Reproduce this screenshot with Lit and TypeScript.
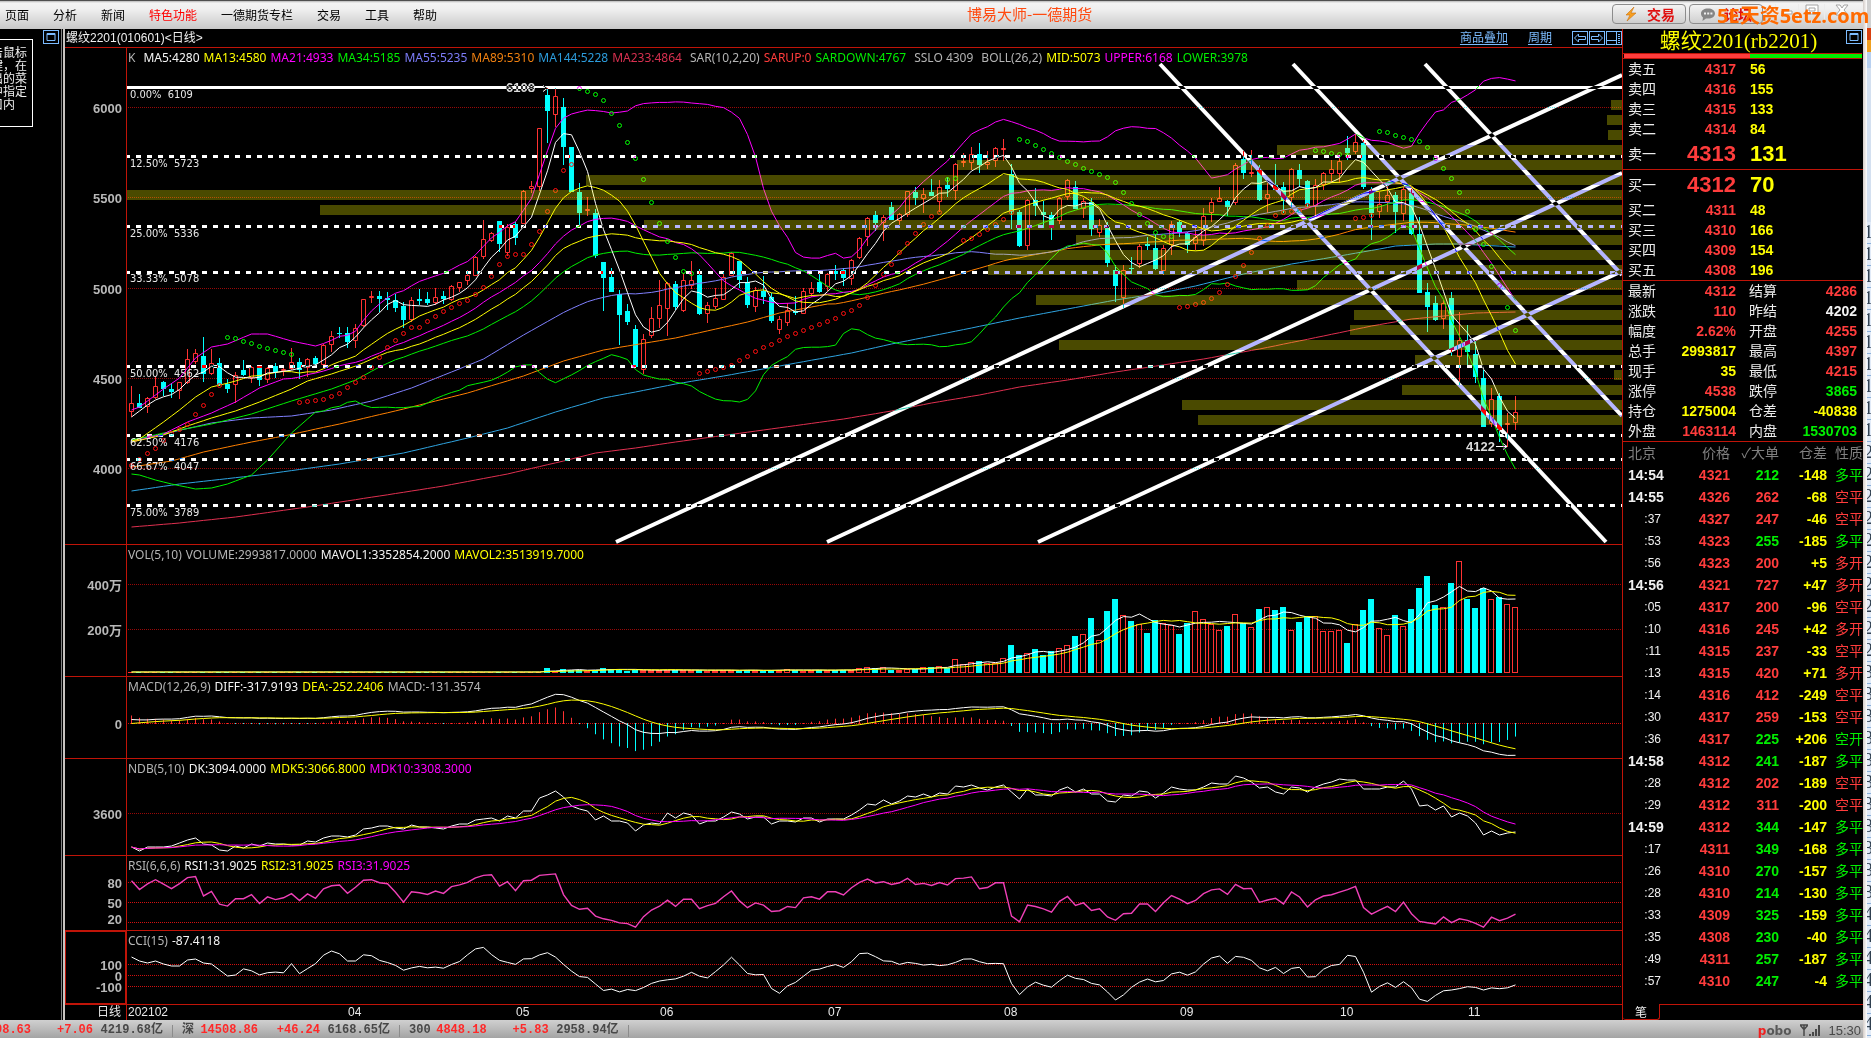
import { LitElement, html, svg, css } from "lit";
import { customElement, property } from "lit/decorators.js";
import { classMap } from "lit/directives/class-map.js";

/* ------------------------------------------------------------------ */
/* Daily bars: direction (r = up, c = down), high, low, body top and   */
/* body bottom, all on the vertical plot scale of the price panel.     */
/* ------------------------------------------------------------------ */
const RAW = `
r386,417,403,412 c394,408,403,408 r397,413,398,407 r376,399,386,398 c381,396,382,389
c383,398,389,392 r382,399,382,391 r349,384,359,383 r349,364,353,362 c337,382,356,374
r349,375,363,374 c358,386,363,385 c379,393,384,389 r372,403,375,385 c360,376,370,375
r366,383,367,378 c366,386,366,380 r367,383,368,380 c363,378,366,372 r368,376,369,370
r348,370,362,369 c358,379,362,370 r358,377,359,368 c356,365,358,364 r344,365,345,365
r331,352,336,345 c327,338,333,334 c327,348,333,342 r324,348,328,341 r299,327,299,326
r291,303,296,298 c291,312,296,299 c292,310,298,300 c294,312,300,308 c302,328,306,320
r297,322,300,320 c289,305,299,301 c292,305,299,303 r288,305,297,303 c291,304,296,299
r285,301,286,300 r282,292,282,288 r270,285,275,281 r256,276,257,276 r220,259,239,257
r232,242,233,241 c221,252,221,244 r224,256,227,253 c222,245,224,238 r190,224,191,224
r181,193,186,189 r128,191,128,187 c88,143,95,111 r88,127,96,115 c98,165,107,147
c147,192,147,192 c183,227,192,213 r197,216,209,211 c209,258,213,256 c262,311,262,278
c268,292,277,292 c290,345,294,315 c304,325,311,322 c325,367,329,367 r334,374,339,370
r307,338,318,336 r280,328,305,319 r282,336,283,309 c281,310,284,307 r273,312,280,311
r261,289,280,286 c269,315,275,314 r302,323,305,314 r288,309,298,307 r272,300,277,300
r252,276,253,276 c261,288,261,280 c277,308,282,305 r287,312,290,307 c276,304,291,297
c293,323,297,321 r316,334,319,330 r303,326,310,323 c296,315,311,313 r288,314,291,314
r282,297,288,294 c273,293,282,292 r273,291,274,287 c265,280,271,274 c268,286,270,278
r259,285,260,279 r237,259,238,258 r217,246,218,237 c211,231,215,223 r215,241,217,223
c202,220,207,220 r213,226,214,221 r191,217,191,215 c187,205,192,198 r188,213,194,199
c179,196,192,196 r180,212,187,202 c177,197,185,189 r163,200,164,191 r153,167,161,163
r147,170,154,163 c143,173,154,165 r151,169,162,165 r147,167,148,161 r139,161,148,150
c164,229,174,212 c210,247,212,246 r199,250,200,246 c188,216,200,206 c201,228,212,215
c212,240,215,228 r197,224,198,221 r179,200,180,197 c181,209,187,209 r198,218,201,209
c198,236,202,229 r219,237,225,233 c222,267,227,263 c265,302,270,286 r265,308,270,298
c257,274,268,269 r244,268,246,264 c237,250,244,246 c234,270,248,269 r245,275,248,271
r221,255,224,245 c220,237,222,233 c232,253,233,245 r228,250,237,244 r208,246,216,241
r198,222,202,213 r187,202,198,202 c200,216,201,207 r163,205,165,203 c150,179,159,173
r150,177,172,173 c165,201,170,200 r183,213,194,199 c164,191,185,190 c182,213,187,201
r168,208,169,198 c164,187,170,179 c180,208,181,204 r179,215,185,206 r172,190,173,185
r160,183,169,174 r157,183,161,174 c136,160,148,153 r134,154,142,152 c140,189,143,187
c187,240,191,213 r192,218,204,212 r185,212,195,202 c192,233,195,212 r187,221,189,214
c189,235,193,234 c217,293,234,293 c283,332,292,307 c296,321,303,320 r300,329,303,319
c292,356,298,350 r312,385,340,357 c325,365,340,352 c340,383,354,377 c370,427,378,427
r388,427,399,424 c393,442,396,430 r413,447,423,425 r396,430,412,423`;

interface Bar { up: boolean; h: number; l: number; t: number; b: number; c: number; }
const BARS: Bar[] = RAW.trim().split(/\s+/).map((s) => {
  const up = s[0] === "r";
  const [h, l, t, b] = s.slice(1).split(",").map(Number);
  return { up, h, l, t, b, c: up ? t : b };
});
const N = BARS.length;
const LEFT = 127;
const WIDTH = 1495;
const xAt = (i: number) => 131 + 8 * i;
const toPrice = (y: number) => 6000 - (y - 107.5) / 0.1805;

type Keys = [number, number][];
/* Linear interpolation between keyed samples. */
function keyed(keys: Keys, from: number, to: number): number[] {
  const out: number[] = [];
  let k = 0;
  for (let i = from; i < to; i++) {
    while (k < keys.length - 2 && keys[k + 1][0] <= i) k++;
    const [a, ya] = keys[k];
    const [b, yb] = keys[Math.min(k + 1, keys.length - 1)];
    out.push(b === a ? ya : ya + ((yb - ya) * (i - a)) / (b - a));
  }
  return out;
}
const closes = BARS.map((b) => b.c);
const mean = (v: number[]) => v.reduce((a, b) => a + b, 0) / v.length;
function average(src: number[], n: number): number[] {
  return src.map((_, i) => mean(src.slice(Math.max(0, i - n + 1), i + 1)));
}
function ma(n: number, head: Keys): number[] {
  const full = average(closes, n);
  head = [...head, [n - 1, full[n - 1]]];
  return [...keyed(head, 0, n - 1), ...full.slice(n - 1)];
}
const MA5 = ma(5, [[0, 417], [1, 411], [2, 405], [3, 400]]);
const MA13 = ma(13, [[0, 441], [1, 439], [4, 422], [6, 410], [8, 397], [10, 387]]);
const MA21 = ma(21, [[0, 442], [1, 440], [4, 434], [7, 422], [10, 413], [13, 402], [16, 388], [19, 379]]);
const MA34 = ma(34, [[0, 440], [4, 433], [10, 424], [15, 414], [20, 401], [25, 389], [28, 380], [31, 367]]);
const MA55 = ma(55, [[0, 440], [4, 434], [10, 423], [15, 418], [20, 416], [25, 410], [30, 401], [35, 388], [40, 372], [44, 359], [49, 335]]);
const MA89 = ma(89, [[0, 467], [5, 461], [9, 452], [15, 442], [19, 436], [26, 424], [34, 409], [42, 393], [49, 376], [54, 361], [59, 350], [62, 346], [68, 338], [77, 322], [81, 313], [87, 304]]);
const MA144 = keyed([[0, 491], [6, 484], [16, 475], [26, 464], [34, 453], [42, 438], [47, 428], [53, 412], [59, 398], [63, 392], [68, 384], [74, 376], [81, 366], [90, 353], [95, 344], [100, 336], [105, 328], [111, 318], [117, 309], [123, 300], [128, 294], [133, 286], [139, 274], [145, 264], [151, 256], [156, 249], [158, 246], [163, 244], [166, 244], [173, 247]], 0, N);
const MA233 = keyed([[0, 527], [6, 523], [13, 517], [22, 507], [31, 496], [39, 486], [47, 474], [54, 461], [58, 453], [63, 448], [68, 442], [79, 430], [89, 419], [95, 411], [100, 403], [106, 395], [111, 387], [117, 380], [123, 372], [134, 359], [141, 349], [149, 336], [155, 326], [160, 319], [168, 313], [173, 312]], 0, N);
const MID = ma(26, [[0, 442], [4, 435], [7, 426], [10, 418], [13, 411], [16, 402], [20, 389], [22, 381]]);
const sigma = closes.map((_, i) => {
  const w = closes.slice(Math.max(0, i - 25), i + 1);
  const m = mean(w);
  return Math.sqrt(mean(w.map((v) => (v - m) ** 2)));
});
const UPPER = [
  ...keyed([[0, 410], [1, 407], [4, 389], [6, 378], [8, 358], [10, 347], [12, 344], [15, 334], [17, 334], [20, 341], [23, 346], [25, 341]], 0, 25),
  ...MID.slice(25).map((m, i) => m - 2 * sigma[i + 25]),
];
const LOWER = [
  ...keyed([[0, 474], [1, 475], [3, 480], [5, 484], [8, 489], [10, 488], [12, 484], [15, 475], [17, 460], [20, 433], [23, 412], [25, 410]], 0, 25),
  ...MID.slice(25).map((m, i) => m + 2 * sigma[i + 25]),
];

/* Parabolic stops: first bar, colour, samples. */
const SAR: [number, string, string][] = [
  [0, "r", "465 459 453 448 440 433 429 424 414 405 394 385"],
  [12, "g", "337 338 341 343 346 348 350 352 354"],
  [21, "r", "402 401 400 399 396 393 387 382 377 367 357 347 340 333 327 327 321 316 311 307 303 300 294 287 276 264 256 254 254 244 231 211 190 170 164"],
  [56, "g", "88 91 94 100 113 125 142 158 179 202 223 241 257 271 273"],
  [71, "r", "373 371 369 367 365 360 356 351 347 344 340 336 333 330 327 324 321 318 313 310 305 297 285 274 264 252 243 233 224 216 212"],
  [102, "g", "179 178"],
  [104, "r", "240 238 234 229 224 219 212"],
  [111, "g", "139 141 145 149 153 157 161 164 168 171 174 177 182 192 203 214 223 232 236 236"],
  [131, "r", "307 306 304 302 298 292 284 276 265 252 238 225 215 212 211 210 205"],
  [148, "g", "150 151 153 154 155"],
  [153, "r", "218 217 215"],
  [156, "g", "131 132 135 137 139 141 147 158 168 178 192 211 229 244 266 285 307 330"],
];

/* Turnover-by-price profile: top edge, left edge. */
const PROFILE: Keys = [[100, 1611], [115, 1607], [130, 1608], [145, 1277], [160, 957], [175, 586], [190, 127], [205, 320], [220, 644], [235, 1076], [250, 990], [265, 988], [280, 1297], [295, 1036], [310, 1354], [325, 1350], [340, 1059], [355, 1415], [370, 1614], [385, 1402], [400, 1182], [415, 1198]];

const LEVELS: [number, string][] = [[87.5, "0.00%  6109"], [156.5, "12.50%  5723"], [226.5, "25.00%  5336"], [272.5, "33.33%  5078"], [366.5, "50.00%  4562"], [435.5, "62.50%  4176"], [459.5, "66.67%  4047"], [505.5, "75.00%  3789"]];

const CHANNELS = [
  [1160, 64, 1606, 542], [1293, 64, 1622, 416], [1425, 64, 1622, 275],
  [616, 542, 1622, 75], [827, 542, 1622, 173], [1038, 542, 1622, 271],
];

const VOLUME = ("1 ".repeat(52) +
  "5 2 4 3 3 2 3 5 4 4 2 3 3 3 3 3 3 3 3 3 2 3 3 3 2 3 3 2 3 3 4 3 2 3 3 3 3 3 3 2 3")
  .split(" ").map(Number).slice(0, 91).concat(
  "5 6 5 6 3 3 4 4 6 6 7 5 14 9 11 12 10 10 15 28 18 20 24 18 22 25 28 37 39 55 33 62 74 58 52 49 40 53 50 48 39 50 62 54 49 43 47 59 50 46 64 66 63 66 43 51 57 57 42 42 43 30 49 63 74 45 38 58 47 64 85 97 68 66 90 112 74 65 85 74 76 69 66".split(" ").map(Number));

const NDB = "847 851 847 847 847 846 843 840 838 844 845 850 851 846 848 844 846 843 844 844 845 845 841 842 838 836 836 837 835 829 828 826 826 828 829 825 827 827 828 829 826 824 824 820 819 818 821 816 818 811 811 798 795 791 797 806 809 811 820 816 821 821 823 831 825 823 824 813 818 813 815 824 821 821 817 812 814 819 817 817 824 821 821 822 818 818 822 819 819 819 815 810 804 805 800 804 801 796 797 794 797 793 794 786 787 785 788 790 787 785 792 799 789 795 795 796 790 787 792 789 794 794 801 802 795 796 791 792 798 793 787 789 790 790 787 783 784 784 776 778 782 788 787 792 794 787 788 792 787 784 782 779 780 780 789 789 789 787 787 781 789 806 805 810 806 817 813 816 823 835 831 835 833 832".split(" ").map(Number);

/* MACD(12,26,9) */
const prices = closes.map(toPrice);
const DIFF: number[] = [];
const DEA: number[] = [];
{
  let fast = prices[0] - 10;
  let slow = fast - 40;
  let dea = 0;
  prices.forEach((p, i) => {
    if (i) {
      fast += ((p - fast) * 2) / 13;
      slow += ((p - slow) * 2) / 27;
      dea += ((fast - slow - dea) * 2) / 10;
    }
    DIFF.push(fast - slow);
    DEA.push(dea);
  });
}
/* RSI(6) */
const RSI: number[] = [];
{
  let gain = 24;
  let all = 29;
  prices.forEach((p, i) => {
    if (i) {
      const d = p - prices[i - 1];
      gain = (gain * 5 + Math.max(d, 0)) / 6;
      all = (all * 5 + Math.abs(d)) / 6;
    }
    RSI.push((100 * gain) / all);
  });
}
/* CCI(15) */
const typical = BARS.map((b) => toPrice((b.h + b.l + b.c) / 3));
const CCI = [
  ...keyed([[0, 957], [1, 961], [2, 963], [3, 961], [4, 964], [5, 966], [6, 966], [7, 960], [8, 959], [9, 963], [10, 964], [11, 970], [12, 976], [13, 975], [14, 970]], 0, 14),
  ...typical.slice(14).map((tp, k) => {
    const w = typical.slice(k, k + 15);
    const m = mean(w);
    return 975.3 - ((tp - m) / (0.015 * mean(w.map((v) => Math.abs(v - m))))) * 0.11;
  }),
];

const line = (v: number[], color: string, width = 1) => svg`
  <polyline points=${v.map((y, i) => `${xAt(i) + 0.5},${y.toFixed(1)}`).join(" ")}
    fill="none" stroke=${color} stroke-width=${width}></polyline>`;
const grid = (ys: number[], color = "#980808") => ys.map((y) => svg`
  <line x1=${LEFT + 1} x2=${LEFT + WIDTH} y1=${y} y2=${y} stroke=${color} stroke-dasharray="1 1"></line>`);

function drawPrice() {
  return svg`
    ${grid([107.5, 197.5, 288.5, 378.5, 468.5])}
    ${BARS.map((b, i) => {
      const x = xAt(i);
      return b.up
        ? svg`<path d="M${x + 0.5} ${b.h}V${b.t}M${x + 0.5} ${b.b}V${b.l}M${x - 1.5} ${b.t + 0.5}h4V${Math.max(b.b - 0.5, b.t + 1.5)}h-4z" fill="none" stroke="#ff3232"></path>`
        : svg`<path d="M${x} ${b.h}h1V${b.l}h-1zM${x - 2} ${b.t}h5V${Math.max(b.b, b.t + 1)}h-5z" fill="#00ffff"></path>`;
    })}
    ${line(MA233, "#e03050")}${line(MA144, "#2fa4e0")}${line(MA89, "#ff8000")}${line(MA55, "#8080ff")}
    ${line(MA34, "#00f000")}${line(MA21, "#ff00ff")}${line(MA13, "#ffff00")}${line(MA5, "#ffffff")}
    ${line(MID, "#ffff00")}${line(UPPER, "#ff00ff")}${line(LOWER, "#00f000")}
    ${SAR.map(([start, c, list]) => list.split(" ").map((y, k) => svg`
      <ellipse cx=${xAt(start + k) + 0.5} cy=${Number(y) + 0.5} rx="2" ry="2" fill="none" stroke=${c === "r" ? "#ff1010" : "#00ff00"}></ellipse>`))}
    ${PROFILE.map(([y, x]) => svg`<rect x=${x} y=${y} width=${LEFT + WIDTH - x} height="10" fill="#ffff00" fill-opacity="0.29"></rect>`)}
    ${LEVELS.map(([y], k) => svg`<line class="xor" x1="125" x2="1622" y1=${y} y2=${y} stroke="#fff" stroke-width="3" stroke-dasharray=${k ? "5 6" : "none"}></line>`)}
    ${CHANNELS.map(([a, b, c, d]) => svg`<line class="xor" x1=${a} y1=${b} x2=${c} y2=${d} stroke="#fff" stroke-width="4"></line>`)}
    <path d="M535 88.500h12m-4 -3l4 3l-4 3M1496 446.500h11m-4 -3l4 3l-4 3" class="xor" fill="none" stroke="#fff"></path>`;
}
function drawVolume() {
  const tops = VOLUME.map((v) => 673 - v);
  return svg`
    ${grid([584.5, 629.5])}
    ${BARS.map((b, i) => {
      const x = xAt(i);
      const h = VOLUME[i];
      if (b.up && h > 3) return svg`<rect x=${x - 2.5} y=${673 - h + 0.5} width="5" height=${h - 1} fill="none" stroke="#ff3232"></rect>`;
      return svg`<rect x=${x - 3} y=${673 - h} width=${h > 1 ? 6 : 5} height=${h} fill=${b.up ? "#ff3232" : "#00ffff"}></rect>`;
    })}
    ${line(average(tops, 5), "#ffffff")}${line(average(tops, 10), "#ffff00")}`;
}
function drawMacd() {
  const y = (v: number) => 723.5 - v * 0.1;
  return svg`
    ${grid([723.5], "#d01010")}
    ${DIFF.map((d, i) => {
      const v = 2 * (d - DEA[i]);
      return svg`<line x1=${xAt(i) + 0.5} x2=${xAt(i) + 0.5} y1=${v > 0 ? 724 : 723} y2=${v > 0 ? Math.min(y(v), 723) : Math.max(y(v), 724)} stroke=${v > 0 ? "#ff3232" : "#00ffff"}></line>`;
    })}
    ${line(DIFF.map(y), "#ffffff")}${line(DEA.map(y), "#ffff00")}`;
}
function drawNdb() {
  return svg`${grid([813.5])}
    ${line(NDB, "#ffffff")}
    ${line(average(NDB, 5), "#ffff00")}
    ${line(average(NDB, 10), "#ff00ff")}`;
}
function drawRsi() {
  const v = RSI.map((r) => 902.5 - (r - 50) / 1.5);
  return svg`${grid([882.5, 902.5, 922.5], "#d01010")}${line(v, "#f040b8", 1.4)}`;
}
const drawCci = () => svg`${grid([964.5, 975.5, 986.5], "#d01010")}${line(CCI, "#ffffff")}`;

type Run = [string, string, string?];
interface Panel {
  id: string; top: number; height: number; legend: Run[];
  axis: [number, string][]; draw: () => unknown; active?: boolean;
}
const PANELS: Panel[] = [
  {
    id: "K线", top: 48, height: 496, draw: drawPrice,
    legend: [["K", "gray", "wide"], ["MA5:4280", "white"], ["MA13:4580", "yellow"], ["MA21:4933", "magenta"], ["MA34:5185", "green"], ["MA55:5235", "violet"], ["MA89:5310", "orange"], ["MA144:5228", "blue"], ["MA233:4864", "crimson", "wide"], ["SAR(10,2,20)", "gray"], ["SARUP:0", "red"], ["SARDOWN:4767", "green", "wide"], ["SSLO 4309", "gray", "wide"], ["BOLL(26,2)", "gray"], ["MID:5073", "yellow"], ["UPPER:6168", "magenta"], ["LOWER:3978", "green"]],
    axis: [[108, "6000"], [198, "5500"], [289, "5000"], [379, "4500"], [469, "4000"]],
  },
  { id: "VOL", top: 545, height: 131, draw: drawVolume, legend: [["VOL(5,10)", "gray"], ["VOLUME:2993817.0000", "gray"], ["MAVOL1:3352854.2000", "white"], ["MAVOL2:3513919.7000", "yellow"]], axis: [[585, "400万"], [630, "200万"]] },
  { id: "MACD", top: 677, height: 81, draw: drawMacd, legend: [["MACD(12,26,9)", "gray"], ["DIFF:-317.9193", "white"], ["DEA:-252.2406", "yellow"], ["MACD:-131.3574", "gray"]], axis: [[724, "0"]] },
  { id: "NDB", top: 759, height: 96, draw: drawNdb, legend: [["NDB(5,10)", "gray"], ["DK:3094.0000", "white"], ["MDK5:3066.8000", "yellow"], ["MDK10:3308.3000", "magenta"]], axis: [[814, "3600"]] },
  { id: "RSI", top: 856, height: 74, draw: drawRsi, legend: [["RSI(6,6,6)", "gray"], ["RSI1:31.9025", "white"], ["RSI2:31.9025", "yellow"], ["RSI3:31.9025", "magenta"]], axis: [[883, "80"], [903, "50"], [919, "20"]] },
  { id: "CCI", top: 931, height: 73, draw: drawCci, active: true, legend: [["CCI(15)", "gray"], ["-87.4118", "white"]], axis: [[965, "100"], [976, "0"], [987, "-100"]] },
];
const MONTHS: [number, string][] = [[128, "202102"], [348, "04"], [516, "05"], [660, "06"], [828, "07"], [1004, "08"], [1180, "09"], [1340, "10"], [1468, "11"]];

const palette = css`
  .white { color: #f4f4f4; } .gray { color: #b4b4b4; } .yellow { color: #ffff00; }
  .magenta { color: #ff00ff; } .green { color: #00ee00; } .violet { color: #7c7cf8; }
  .orange { color: #f08010; } .blue { color: #2c9cdc; } .crimson { color: #d83050; }
  .red { color: #ff3c3c; }
`;

@customElement("chart-stack")
export class ChartStack extends LitElement {
  static styles = [palette, css`
    :host { display: grid; min-width: 0; background: #000; position: relative;
      grid-template-rows: 18px 497fr 132fr 82fr 97fr 75fr 74fr 16px;
      font-family: "Noto Sans", "Noto Sans CJK SC", sans-serif; font-size: 12px; }
    header { display: flex; align-items: center; color: #f0f0f0; font-family: "Liberation Sans", "Noto Sans CJK SC", sans-serif;
      font-size: 12px; line-height: 18px; padding-left: 1px; gap: 20px; }
    h2 { margin: 0 auto 0 0; font: inherit; }
    header a { color: #7cbcff; text-underline-offset: 2px; }
    .tools { display: flex; gap: 1px; }
    .tools button { padding: 0; border: 0; background: none; width: 16px; height: 14px; display: block; }
    .tools svg { display: block; width: 16px; height: 14px; }
    .panel { display: grid; grid-template-columns: 62px minmax(0, 1fr); border-top: 1px solid #c01408; min-height: 0; }
    .axis { position: relative; border-right: 1px solid #c01408; box-sizing: border-box; font: bold 13px "Liberation Sans", "Noto Sans CJK SC", sans-serif; color: #b8b8b8; }
    .axis span { position: absolute; right: 4px; transform: translateY(-50%); line-height: 11px; white-space: nowrap; }
    .active .axis { box-shadow: inset 0 0 0 1px #c01408; }
    .plot { position: relative; min-width: 0; min-height: 0; }
    .plot > svg { position: absolute; inset: 0; width: 100%; height: 100%; display: block; }
    .xor, .note { mix-blend-mode: difference; }
    .legend { position: absolute; left: 1px; top: 0; display: flex; gap: 4px; line-height: 20px; white-space: nowrap; }
    .legend .wide { margin-right: 4px; }
    .level { position: absolute; left: 3px; font: 11px "DejaVu Sans Condensed", "DejaVu Sans", sans-serif; line-height: 14px; color: #e8e8e8; white-space: pre; }
    .note { position: absolute; font: bold 13px "Liberation Sans", sans-serif; line-height: 14px; color: #dcdcdc; transform: translateY(-50%); }
    .time { display: grid; grid-template-columns: 62px minmax(0, 1fr); border-top: 1px solid #c01408; color: #e8e8e8;
      font: 12px "Liberation Sans", "Noto Sans CJK SC", sans-serif; line-height: 15px; }
    .time .unit { text-align: right; padding-right: 5px; font-size: 12px; border-right: 1px solid #c01408; }
    .months { position: relative; }
    .months span { position: absolute; }
  `];
  private pct(v: number, base: number, size: number) { return `${(((v - base) / size) * 100).toFixed(3)}%`; }
  render() {
    return html`
      <header>
        <h2>螺纹2201(010601)&lt;日线&gt;</h2>
        <a href="#overlay">商品叠加</a><a href="#period">周期</a>
        <div class="tools">
          <button aria-label="上一个"><svg viewBox="0 0 16 14" fill="none" stroke="#7cbcff"><rect x=".5" y=".5" width="15" height="13"></rect><path d="M2.500 7l4-4v2.500h7v3h-7v2.500z"></path></svg></button>
          <button aria-label="下一个"><svg viewBox="0 0 16 14" fill="none" stroke="#7cbcff"><rect x=".5" y=".5" width="15" height="13"></rect><path d="M13.500 7l-4-4v2.500h-7v3h7v2.500z"></path></svg></button>
          <button aria-label="布局"><svg viewBox="0 0 16 14" fill="none" stroke="#7cbcff"><rect x=".5" y=".5" width="15" height="13"></rect><path d="M10.500 1v12M1 9.500h9.500M12 3.500h2M12 5.500h2M12 7.500h2M12 9.500h2M12 11.500h2"></path></svg></button>
        </div>
      </header>
      ${PANELS.map((p, k) => html`
        <section class=${classMap({ panel: true, active: !!p.active })} aria-label=${p.id}>
          <div class="axis">${p.axis.map(([y, t]) => html`<span style="top:${this.pct(y, p.top, p.height)}">${t}</span>`)}</div>
          <div class="plot">
            <svg viewBox="${LEFT} ${p.top} ${WIDTH} ${p.height}" preserveAspectRatio="none">${p.draw()}</svg>
            <div class="legend">${p.legend.map(([t, c, w]) => html`<span class="${c} ${w ?? ""}">${t}</span>`)}</div>
            ${k === 0 ? html`
              ${LEVELS.map(([y, t]) => html`<span class="level" style="top:${this.pct(y, p.top, p.height)}">${t}</span>`)}
              <span class="note" style="left:${this.pct(506, LEFT, WIDTH)};top:${this.pct(88.5, p.top, p.height)}">6108</span>
              <span class="note" style="left:${this.pct(1466, LEFT, WIDTH)};top:${this.pct(446.5, p.top, p.height)}">4122</span>` : ""}
          </div>
        </section>`)}
      <div class="time">
        <span class="unit">日线</span>
        <div class="months">${MONTHS.map(([x, t]) => html`<span style="left:${this.pct(x, LEFT, WIDTH)}">${t}</span>`)}</div>
      </div>`;
  }
}

const ASKS = [["卖五", "4317", "56"], ["卖四", "4316", "155"], ["卖三", "4315", "133"], ["卖二", "4314", "84"], ["卖一", "4313", "131"]];
const BIDS = [["买一", "4312", "70"], ["买二", "4311", "48"], ["买三", "4310", "166"], ["买四", "4309", "154"], ["买五", "4308", "196"]];
const STATS = [
  ["最新", "4312", "red", "结算", "4286", "red"], ["涨跌", "110", "red", "昨结", "4202", "white"],
  ["幅度", "2.62%", "red", "开盘", "4255", "red"], ["总手", "2993817", "yellow", "最高", "4397", "red"],
  ["现手", "35", "yellow", "最低", "4215", "red"], ["涨停", "4538", "red", "跌停", "3865", "green"],
  ["持仓", "1275004", "yellow", "仓差", "-40838", "yellow"], ["外盘", "1463114", "red", "内盘", "1530703", "green"],
];
const TICKS = `14:54 4321 212g -148 多平g|14:55 4326 262r -68 空平r|:37 4327 247r -46 空平r|:53 4323 255g -185 多平g|:56 4323 200r +5 多开r|14:56 4321 727r +47 多开r|:05 4317 200r -96 空平r|:10 4316 245r +42 多开r|:11 4315 237r -33 空平r|:13 4315 420r +71 多开r|:14 4316 412r -249 空平r|:30 4317 259r -153 空平r|:36 4317 225g +206 空开g|14:58 4312 241g -187 多平g|:28 4312 202r -189 空平r|:29 4312 311r -200 空平r|14:59 4312 344g -147 多平g|:17 4311 349g -168 多平g|:26 4310 270g -157 多平g|:28 4310 214g -130 多平g|:33 4309 325g -159 多平g|:35 4308 230g -40 多平g|:49 4311 257g -187 多平g|:57 4310 247g -4 多平g`
  .split("|").map((r) => r.split(" "));
const tone = (s: string) => (s.endsWith("g") ? "green" : "red");

const windowIcon = html`<svg class="win" viewBox="0 0 16 14" fill="none" stroke="#7cbcff"><rect x=".5" y=".5" width="15" height="13"></rect><path d="M4 3.500h8v7h-8zM4 4.500h8"></path></svg>`;

@customElement("quote-panel")
export class QuotePanel extends LitElement {
  static styles = [palette, css`
    :host { display: flex; flex-direction: column; box-sizing: border-box; border-left: 1px solid #c01408; background: #000;
      font: bold 14px "Liberation Sans", "Noto Sans CJK SC", sans-serif; color: #ececec; }
    header { display: flex; height: 24px; align-items: flex-start; }
    h2 { flex: 1; margin: 0 0 0 8px; text-align: center; font: 21px "Liberation Serif", "Noto Sans CJK SC", serif; line-height: 24px; color: #ffff00; white-space: nowrap; }
    .win { width: 16px; height: 14px; margin: 1px 1px 0 0; }
    .ratio { display: flex; height: 4px; border: solid #c01408; border-width: 1px 0; margin-right: 1px; padding-left: 1px; }
    .ratio i { flex: 126; background: #ff3c3c; } .ratio b { flex: 112; background: #00ee00; }
    table { border-collapse: collapse; table-layout: fixed; width: 100%; }
    td, th { padding: 0; text-align: right; font-weight: bold; white-space: nowrap; overflow: visible; }
    .label { font-weight: normal; text-align: left; padding-left: 5px; }
    .book td, .book th, .stats td, .stats th { height: 20px; line-height: 20px; }
    .book .best td, .book .best th { height: 30px; line-height: 30px; }
    .book .best .price, .book .best .size { font-size: 22px; }
    .size { text-align: left; padding-left: 14px; color: #ffff00; }
    .bids, .stats, .ticks { border-top: 1px solid #c01408; }
    .stats .second { padding-left: 13px; }
    .stats .last { padding-right: 6px; }
    .ticks td, .ticks th { height: 22px; line-height: 22px; }
    .ticks thead th { font-weight: normal; color: #808080; }
    .ticks .time { text-align: left; padding-left: 5px; color: #f0f0f0; }
    .ticks .sub { text-align: right; padding-right: 8px; font-weight: normal; font-size: 12px; }
    .ticks .kind { font-weight: normal; }
    .tabs { margin-top: auto; display: flex; height: 16px; }
    .tabs button { width: 37px; height: 16px; padding: 0; border: 0; border-right: 1px solid #c01408; border-bottom: 1px solid #c01408; border-radius: 0 0 3px 3px; background: none; color: #ececec; font: 12px "Noto Sans CJK SC", sans-serif; line-height: 14px; }
    .tabs i { flex: 1; border-top: 1px solid #c01408; }
    .c1 { width: 46px; } .c2 { width: 61px; } .c3 { width: 49px; } .c4 { width: 48px; }
    .s1 { width: 40px; } .s2 { width: 73px; } .s3 { width: 50px; }
  `];
  private book(rows: string[][], cls: string) {
    return html`<table class="book ${cls}"><colgroup><col class="s1"><col class="s2"><col></colgroup>
      ${rows.map((r) => html`<tr class=${r[0][1] === "一" ? "best" : ""}><th scope="row" class="label">${r[0]}</th><td class="price red">${r[1]}</td><td class="size">${r[2]}</td></tr>`)}
    </table>`;
  }
  render() {
    return html`
      <header><h2>螺纹2201(rb2201)</h2>${windowIcon}</header>
      <div class="ratio"><i></i><b></b></div>
      ${this.book(ASKS, "asks")}${this.book(BIDS, "bids")}
      <table class="stats"><colgroup><col class="s1"><col class="s2"><col class="s3"><col></colgroup>
        ${STATS.map((r) => html`<tr><th scope="row" class="label">${r[0]}</th><td class=${r[2]}>${r[1]}</td><th scope="row" class="label second">${r[3]}</th><td class="last ${r[5]}">${r[4]}</td></tr>`)}
      </table>
      <table class="ticks"><colgroup><col class="c1"><col class="c2"><col class="c3"><col class="c4"><col></colgroup>
        <thead><tr><th class="label">北京</th><th>价格</th><th>✓大单</th><th>仓差</th><th>性质</th></tr></thead>
        <tbody>${TICKS.map(([t, p, v, d, k]) => html`<tr>
          <td class="time ${t[0] === ":" ? "sub" : ""}">${t}</td><td class="red">${p}</td><td class=${tone(v)}>${v.slice(0, -1)}</td>
          <td class="yellow">${d}</td><td class="kind ${tone(k)}">${k.slice(0, -1)}</td></tr>`)}</tbody>
      </table>
      <div class="tabs"><button>笔</button><i></i></div>`;
  }
}

@customElement("menu-strip")
export class MenuStrip extends LitElement {
  static styles = css`
    :host { position: relative; display: flex; align-items: center; justify-content: space-between; height: 29px; box-sizing: border-box;
      border-top: 1px solid #505050; background: linear-gradient(#b8b8b8 0, #f4f4f4 2px, #f0f0f0 8px, #c8c8c8); font: 12px "Noto Sans CJK SC", sans-serif; }
    nav { display: flex; gap: 24px; padding-left: 5px; }
    nav button { border: 0; padding: 0; background: none; font: inherit; color: #000; line-height: 26px; }
    nav .hot { color: #ff0000; }
    h1 { position: absolute; left: 967px; top: 0; margin: 0; font: 15px "Noto Sans CJK SC", sans-serif; line-height: 26px; color: #ff4a10; }
    .actions { display: flex; gap: 3px; align-self: flex-start; margin-top: 3px; }
    .actions button { display: flex; align-items: center; justify-content: center; gap: 8px; width: 74px; height: 20px; padding: 0; border: 1px solid #8c8c8c; border-radius: 4px;
      background: linear-gradient(#f4f4f4, #cfcfcf); color: #e01010; font: bold 14px "Noto Sans CJK SC", sans-serif; line-height: 18px; }
    .actions svg { width: 16px; height: 16px; }
    .frame { display: flex; width: 97px; box-sizing: border-box; padding-left: 8px; }
    .actions .frame svg { width: 84px; height: 22px; display: block; }
    .brand { position: absolute; left: 1717px; top: 0; font: bold 20px "Open Sans", "Noto Sans CJK SC", sans-serif; line-height: 30px; color: #ff6a00; white-space: nowrap; }
  `;
  @property({ attribute: false }) items = ["页面", "分析", "新闻", "特色功能", "一德期货专栏", "交易", "工具", "帮助"];
  render() {
    return html`
      <nav>${this.items.map((t) => html`<button class=${t === "特色功能" ? "hot" : ""}>${t}</button>`)}</nav>
      <h1>博易大师-一德期货</h1>
      <div class="actions">
        <button><svg viewBox="0 0 16 16"><path d="M11 1L3 9h4L4 15l9-8H8z" fill="#f8a020" stroke="#c87010" stroke-width=".6"></path></svg>交易</button>
        <button><svg viewBox="0 0 16 16"><path d="M8 2.500c4 0 7 2 7 5s-3 5-7 5l-2 0L2.500 15l.500-3.500C1.700 10.600 1 9.200 1 7.500c0-3 3-5 7-5z" fill="#858585"></path><path d="M4 7.500h2M7.200 7.500h2M10.400 7.500h2" stroke="#eee" stroke-width="2"></path></svg>论坛</button>
        <div class="frame"><svg viewBox="0 0 84 22" fill="none" stroke="#a4a4a4"><path d="M1.500 0v18M24.500 0v18M50.500 0v18" stroke="#ececec"></path><path d="M8 7h10v3h-10z" fill="#fff"></path><path d="M32 1h12v9h-12zM35 4h6v3h-6z" fill="#fff"></path><path d="M62 1h4l2 3 2-3h4l-4 5 4 5h-4l-2-3-2 3h-4l4-5z" fill="#fff"></path></svg></div>
      </div>
      <div class="brand">5E天资5etz.com</div>`;
  }
}

@customElement("status-strip")
export class StatusStrip extends LitElement {
  static styles = css`
    :host { display: flex; justify-content: space-between; height: 18px; overflow: hidden; background: linear-gradient(#d0d0d0, #a4a4a4);
      font: bold 12px "Liberation Mono", "Noto Sans CJK SC", monospace; line-height: 15px; color: #484848; }
    .group { display: flex; padding-top: 3px; white-space: nowrap; }
    .group span { text-align: right; }
    .up { color: #ff2828; }
    .first { width: 31px; direction: rtl; overflow: hidden; }
    .chg { width: 62px; } .amount { width: 70px; } .last { width: 64px; } .near { width: 56px; }
    .sep { width: 1px; height: 12px; margin: 2px 9px; background: #8c8c8c; }
    .tray { display: flex; align-items: center; gap: 8px; padding: 3px 2px 0 0; font: 13px "Liberation Sans", sans-serif; line-height: 15px; }
    .tray b { font: bold 12px "DejaVu Sans", sans-serif; color: #585858; } .tray em { font-style: normal; color: #f02020; }
    .tray svg { width: 21px; height: 13px; display: block; }
  `;
  render() {
    return html`
      <div class="group">
        <span class="up first">98.63</span><span class="up chg">+7.06</span><span class="amount">4219.68亿</span><i class="sep"></i>
        <span>深</span><span class="up last">14508.86</span><span class="up chg">+46.24</span><span class="amount">6168.65亿</span><i class="sep"></i>
        <span>300</span><span class="up near">4848.18</span><span class="up chg">+5.83</span><span class="amount">2958.94亿</span><i class="sep"></i>
      </div>
      <div class="tray"><b><em>p</em>obo</b>
        <svg viewBox="0 0 21 13" stroke="#484848" fill="none"><path d="M1 1h8M1.500 1.500l3.500 4 3.500-4M5 1v11" stroke-width="1.500"></path><path d="M11 12v-2M14 12V8M17 12V5M20 12V1" stroke-width="2"></path></svg>
        <span>15:30</span></div>`;
  }
}

@customElement("app-root")
export class AppRoot extends LitElement {
  static styles = css`
    :host { display: grid; grid-template-columns: minmax(0, 1fr) 8px; min-height: 100vh; background: #000; overflow: hidden; }
    .frame { display: flex; flex-direction: column; min-width: 0; }
    .work { flex: 1; display: grid; grid-template-columns: 65px minmax(0, 1fr) 241px; }
    .side { box-sizing: border-box; border-right: 2px solid #c8c4c0; display: flex; overflow: hidden; }
    .dock { flex: 1; border-right: 1px solid #808080; margin-right: 1px; position: relative; color: #f0f0f0; font: 12px "Noto Sans CJK SC", sans-serif; }
    .hint { margin: 10px 0 0 -2px; width: 35px; height: 88px; box-sizing: border-box; border: 1px solid #fff; padding: 5px 0; overflow: hidden; line-height: 13px; }
    .hint p { margin: 0 0 0 -8px; white-space: nowrap; }
    .dock svg { position: absolute; right: 2px; top: 1px; width: 16px; height: 14px; }
    .edge { display: grid; grid-template-columns: 4px 4px; grid-template-rows: 1fr; background: #e2ebf8; }
    .rail { background: linear-gradient(90deg, #d4ccc8, #ffffff); }
    .rows { overflow: hidden; font: 18px "Liberation Serif", serif; color: #304050; height: 100vh; }
    .cap { height: 28px; background: #d0d0d0; } .logo { height: 12px; background: #d84010; } .logo2 { height: 12px; background: #f0a020; }
    .blue { height: 16px; background: #b8d0f0; } .pale { height: 154px; background: #d4e0f0; }
    .row { height: 22px; line-height: 21px; box-sizing: border-box; border-bottom: 1px solid #8cb0d8; text-indent: -3px; }
  `;
  render() {
    const rows = "1".repeat(10) + "2".repeat(10) + "3".repeat(11) + "4".repeat(6);
    return html`
      <div class="frame">
        <menu-strip></menu-strip>
        <div class="work">
          <aside class="side"><div class="dock">
            <div class="hint">${["击鼠标", "键，在", "出的菜", "中指定", "口内"].map((t) => html`<p>${t}</p>`)}</div>
            ${windowIcon}
          </div></aside>
          <chart-stack></chart-stack>
          <quote-panel></quote-panel>
        </div>
        <status-strip></status-strip>
      </div>
      <div class="edge"><div class="rail"></div><div class="rows">
        <div class="cap"></div><div class="logo"></div><div class="logo2"></div><div class="blue"></div><div class="pale"></div>
        ${[...rows].map((r) => html`<div class="row">${r}</div>`)}
      </div></div>`;
  }
}
